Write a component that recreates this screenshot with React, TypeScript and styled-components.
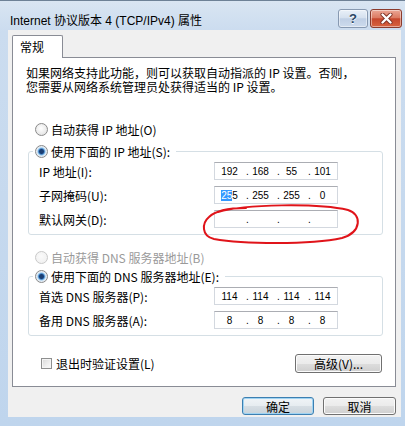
import React from "react";
import styled, { createGlobalStyle } from "styled-components";

const GlobalStyle = createGlobalStyle`
  html, body {
    margin: 0;
    padding: 0;
    background: #bfd5ed;
  }
  body {
    font-family: "Noto Sans CJK SC", sans-serif;
    font-size: 12px;
    color: #000;
  }
`;

const Window = styled.div`
  position: relative;
  width: 405px;
  height: 426px;
  box-sizing: border-box;
  display: flex;
  flex-direction: column;
  background: linear-gradient(180deg, #d9e5f2 0px, #cbdcef 30px, #bfd5ed 100%);
  border-top: 1px solid #6e8196;
`;

const TitleBar = styled.div`
  height: 29px;
  display: flex;
  align-items: flex-start;
  padding: 0 3px 0 10px;
`;

const Title = styled.div`
  flex: 1;
  font: 12px "Liberation Sans", "Noto Sans CJK SC", sans-serif;
  line-height: 14px;
  margin-top: 13px;
  color: #000;
`;

const CaptionButtons = styled.div`
  display: flex;
  gap: 2px;
  margin-top: 8px;
`;

const CaptionButton = styled.div<{ $close?: boolean }>`
  width: ${(p) => (p.$close ? 32 : 30)}px;
  height: 19px;
  box-sizing: border-box;
  border-radius: 3px;
  border: 1px solid ${(p) => (p.$close ? "#8b3b2d" : "#8799b1")};
  background: ${(p) =>
    p.$close
      ? "linear-gradient(#eba796 0%, #dc7b63 45%, #c6472d 52%, #d8633f 100%)"
      : "linear-gradient(#e9f0f8 0%, #d6e1ef 45%, #bfcfe5 52%, #cddbed 100%)"};
  box-shadow: inset 0 0 0 1px rgba(255, 255, 255, 0.45);
  display: flex;
  align-items: center;
  justify-content: center;
  font: bold 13px "Liberation Sans", sans-serif;
  color: #2a4563;
  text-shadow: 0 1px 0 #fff;
`;

const Client = styled.div`
  flex: 1;
  margin: 0 4px 9px 8px;
  padding: 5px 5px 0 4px;
  background: #f0f0f0;
  display: flex;
  flex-direction: column;
`;

const TabStrip = styled.div`
  position: relative;
  z-index: 1;
  height: 22px;
  display: flex;
`;

const Tab = styled.div`
  box-sizing: border-box;
  width: 51px;
  height: 23px;
  border: 1px solid #898c95;
  border-bottom: none;
  border-radius: 2px 2px 0 0;
  background: #fff;
  padding-left: 7px;
  line-height: 21px;
`;

const Panel = styled.div`
  box-sizing: border-box;
  height: 330px;
  border: 1px solid #898c95;
  background: #fff;
  padding: 8px 0 0 13px;
  display: flex;
  flex-direction: column;
  align-items: flex-start;
`;

const Intro = styled.p`
  margin: 0;
  line-height: 14px;
  white-space: nowrap;
`;

const OptionRow = styled.div<{ $top: number; $disabled?: boolean }>`
  display: flex;
  align-items: center;
  gap: 3px;
  height: 16px;
  margin: ${(p) => p.$top}px 0 0 9px;
  color: ${(p) => (p.$disabled ? "#9a9a9a" : "#000")};
  white-space: nowrap;
`;

const RadioMark = styled.span<{ $checked?: boolean; $disabled?: boolean }>`
  width: 13px;
  height: 13px;
  box-sizing: border-box;
  border-radius: 50%;
  border: 1px solid ${(p) => (p.$disabled ? "#c9c9c9" : "#8a8a8a")};
  background: ${(p) =>
    p.$checked
      ? "radial-gradient(circle at 50% 50%, #1b3f73 0 2px, #2f6db5 2.6px, #8fc6ee 3.6px, #dfe9f3 4.4px, #f7f7f7 100%)"
      : p.$disabled
      ? "radial-gradient(circle at 45% 40%, #fafafa 0, #eeeeee 100%)"
      : "radial-gradient(circle at 45% 40%, #ffffff 0, #dcdcdc 100%)"};
`;

const Group = styled.fieldset<{ $top: number }>`
  margin: ${(p) => p.$top}px 0 0 2px;
  width: 355px;
  min-inline-size: 0;
  box-sizing: border-box;
  border: 1px solid #d5dfe5;
  border-radius: 3px;
  padding: 3px 0 6px 10px;
  display: flex;
  flex-direction: column;
  gap: 6px;
`;

const GroupLegend = styled.legend`
  margin-left: -6px;
  padding: 0 6px 0 2px;
  height: 16px;
  display: flex;
  align-items: center;
  gap: 3px;
  white-space: nowrap;
`;

const FieldRow = styled.div`
  display: flex;
  align-items: center;
  height: 18px;
`;

const FieldLabel = styled.span`
  width: 175px;
  white-space: nowrap;
`;

const IpBox = styled.div`
  box-sizing: border-box;
  width: 124px;
  height: 18px;
  border: 1px solid #d3d8df;
  border-top-color: #abadb3;
  background: #fff;
  padding-left: 1px;
  display: flex;
  align-items: center;
  font: 10px "Liberation Sans", sans-serif;
  color: #000;
`;

const Octet = styled.span`
  width: 27px;
  text-align: center;
  white-space: nowrap;
`;

const Selected = styled.span`
  background: #3399ff;
  color: #fff;
`;

const Dot = styled.span`
  width: 4px;
  text-indent: 3px;
  white-space: nowrap;
`;

const BottomRow = styled.div`
  align-self: stretch;
  display: flex;
  align-items: center;
  justify-content: space-between;
  margin: 18px 13px 0 15px;
`;

const CheckRow = styled.div`
  display: flex;
  align-items: center;
  gap: 4px;
  white-space: nowrap;
`;

const CheckMark = styled.span`
  width: 11px;
  height: 11px;
  box-sizing: border-box;
  border: 1px solid #8e8f8f;
  background: linear-gradient(135deg, #d8d8d8 0%, #efefef 60%, #fbfbfb 100%);
  box-shadow: inset 0 0 0 1px #f4f4f4;
`;

const Button = styled.div<{ $width: number; $height?: number; $default?: boolean }>`
  box-sizing: border-box;
  width: ${(p) => p.$width}px;
  height: ${(p) => p.$height ?? 18}px;
  border-radius: 3px;
  border: 1px solid ${(p) => (p.$default ? "#3c7fb1" : "#707070")};
  background: ${(p) =>
    p.$default
      ? "linear-gradient(#f0f4f7 0%, #e6ecf0 50%, #d6dee4 51%, #c9d3da 100%)"
      : "linear-gradient(#f2f2f2 0%, #ebebeb 50%, #dddddd 51%, #cfcfcf 100%)"};
  box-shadow: inset 0 0 0 1px ${(p) => (p.$default ? "#9fd3f2" : "#fbfbfb")};
  display: flex;
  align-items: center;
  justify-content: center;
  white-space: nowrap;
`;

const Footer = styled.div`
  display: flex;
  justify-content: flex-end;
  gap: 9px;
  margin-top: 10px;
`;

const Annotation = styled.svg`
  position: absolute;
  left: 200px;
  top: 200px;
  pointer-events: none;
`;

type Ip = { parts: React.ReactNode[] };

const IpField = ({ parts }: Ip) => (
  <IpBox>
    {parts.map((part, i) => (
      <React.Fragment key={i}>
        {i > 0 && <Dot>.</Dot>}
        <Octet>{part}</Octet>
      </React.Fragment>
    ))}
  </IpBox>
);

const Radio = ({ checked, disabled }: { checked?: boolean; disabled?: boolean }) => (
  <RadioMark $checked={checked} $disabled={disabled} />
);

export default function App() {
  return (
    <>
      <GlobalStyle />
      <Window>
        <TitleBar>
          <Title>Internet 协议版本 4 (TCP/IPv4) 属性</Title>
          <CaptionButtons>
            <CaptionButton>?</CaptionButton>
            <CaptionButton $close>
              <svg width="13" height="11" viewBox="0 0 13 11">
                <path d="M2.5 1.5 L10.5 9.5 M10.5 1.5 L2.5 9.5" stroke="#7a2d20" strokeWidth="4" strokeLinecap="round" />
                <path d="M2.5 1.5 L10.5 9.5 M10.5 1.5 L2.5 9.5" stroke="#ffffff" strokeWidth="2.4" strokeLinecap="round" />
              </svg>
            </CaptionButton>
          </CaptionButtons>
        </TitleBar>

        <Client>
          <TabStrip>
            <Tab>常规</Tab>
          </TabStrip>
          <Panel>
            <Intro>
              如果网络支持此功能，则可以获取自动指派的 IP 设置。否则，
              <br />
              您需要从网络系统管理员处获得适当的 IP 设置。
            </Intro>

            <OptionRow $top={27}>
              <Radio />
              自动获得 IP 地址(O)
            </OptionRow>

            <Group $top={6}>
              <GroupLegend>
                <Radio checked />
                使用下面的 IP 地址(S):
              </GroupLegend>
              <FieldRow>
                <FieldLabel>IP 地址(I):</FieldLabel>
                <IpField parts={["192", "168", "55", "101"]} />
              </FieldRow>
              <FieldRow>
                <FieldLabel>子网掩码(U):</FieldLabel>
                <IpField
                  parts={[
                    <>
                      <Selected>25</Selected>5
                    </>,
                    "255",
                    "255",
                    "0",
                  ]}
                />
              </FieldRow>
              <FieldRow>
                <FieldLabel>默认网关(D):</FieldLabel>
                <IpField parts={["", "", "", ""]} />
              </FieldRow>
            </Group>

            <OptionRow $top={14} $disabled>
              <Radio disabled />
              自动获得 DNS 服务器地址(B)
            </OptionRow>

            <Group $top={3}>
              <GroupLegend>
                <Radio checked />
                使用下面的 DNS 服务器地址(E):
              </GroupLegend>
              <FieldRow>
                <FieldLabel>首选 DNS 服务器(P):</FieldLabel>
                <IpField parts={["114", "114", "114", "114"]} />
              </FieldRow>
              <FieldRow>
                <FieldLabel>备用 DNS 服务器(A):</FieldLabel>
                <IpField parts={["8", "8", "8", "8"]} />
              </FieldRow>
            </Group>

            <BottomRow>
              <CheckRow>
                <CheckMark />
                退出时验证设置(L)
              </CheckRow>
              <Button $width={87} $height={19}>
                高级(V)...
              </Button>
            </BottomRow>
          </Panel>

          <Footer>
            <Button $width={72} $default>
              确定
            </Button>
            <Button $width={73}>取消</Button>
          </Footer>
        </Client>

        <Annotation width="165" height="48" viewBox="0 0 165 48">
          <path
            d="M18 11 C45 3, 118 2, 148 9 C162 13, 162 31, 142 37 C110 44, 42 43, 14 38 C1 35, 2 22, 9 16 C15 10, 30 7, 46 7"
            fill="none"
            stroke="#e0141a"
            strokeWidth="2"
            strokeLinecap="round"
          />
        </Annotation>
      </Window>
    </>
  );
}
